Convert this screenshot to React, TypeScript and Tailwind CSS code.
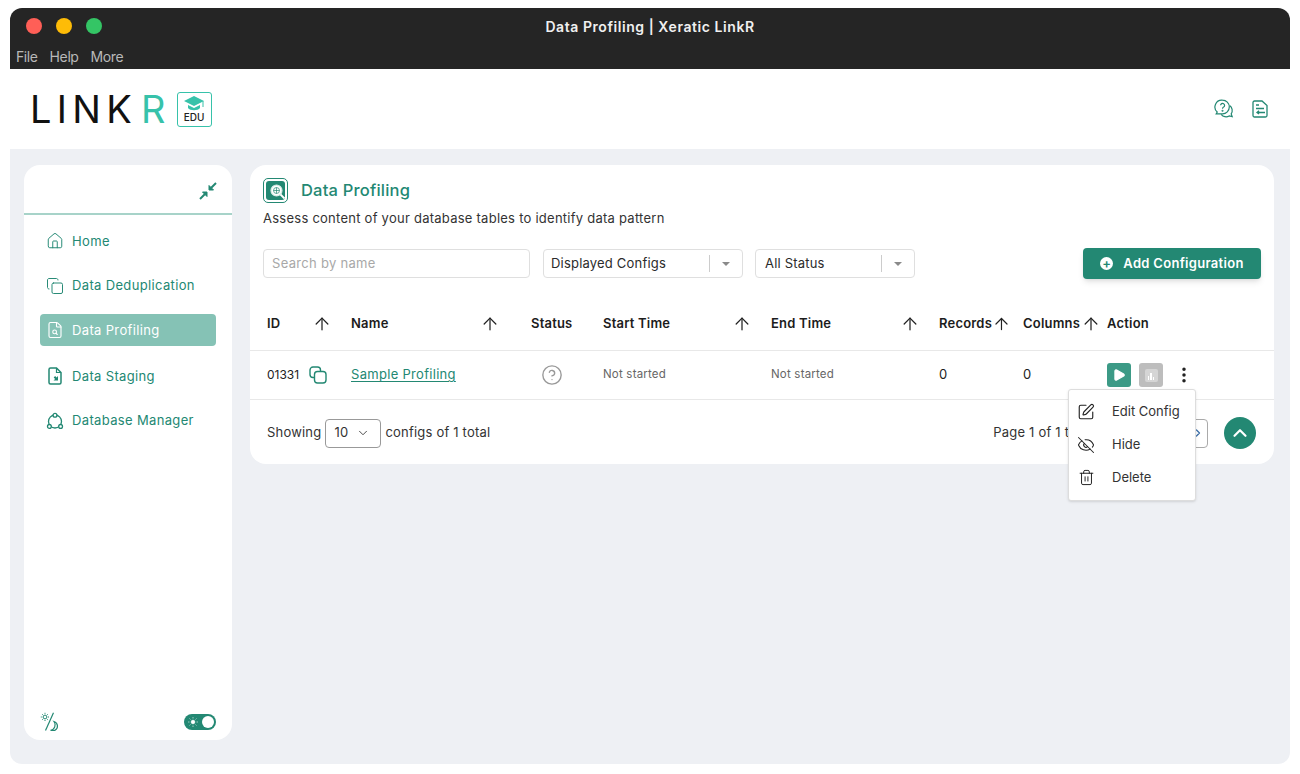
import React from 'react';
import {
  House,
  Copy,
  SquarePen,
  EyeOff,
  Trash2,
  Play,
  EllipsisVertical,
  ChevronUp,
  ChevronDown,
  ChevronRight,
  ArrowUp,
  CircleHelp,
  FileSearch,
} from 'lucide-react';

const teal = 'text-[#238873]';

function CollapseIcon() {
  return (
    <svg width="18" height="18" viewBox="0 0 18 18" fill="currentColor" stroke="currentColor" strokeWidth="1">
      <path d="M10 8V3.500L14.500 8z" />
      <path d="M12 6l5-5" strokeWidth="2" />
      <path d="M8 10v4.500L3.500 10z" />
      <path d="M6 12l-5 5" strokeWidth="2" />
    </svg>
  );
}

function ManagerIcon() {
  return (
    <svg width="18" height="18" viewBox="0 0 18 18" fill="none" stroke="currentColor" strokeWidth="1.300">
      <circle cx="9" cy="9.500" r="6.500" />
      <circle cx="9" cy="3.200" r="1.900" fill="#ffffff" />
      <circle cx="3.400" cy="14.400" r="1.900" fill="#ffffff" />
      <circle cx="14.600" cy="14.400" r="1.900" fill="#ffffff" />
    </svg>
  );
}

function StagingIcon() {
  return (
    <svg width="18" height="18" viewBox="0 0 18 18" fill="none" stroke="currentColor" strokeWidth="1.500">
      <path d="M4.500 1h6L15 5.500V15.500a1.500 1.500 0 0 1-1.500 1.500h-9A1.500 1.500 0 0 1 3 15.500v-13A1.500 1.500 0 0 1 4.500 1z" />
      <path d="M10.500 1v4.500H15" strokeWidth="1.200" />
      <path d="M12 9v4.500H7.500l1.600-1.600-1.400-1.400 1.400-1.400 1.400 1.400z" fill="currentColor" stroke="none" />
    </svg>
  );
}

function ChatHelpIcon() {
  return (
    <svg width="20" height="20" viewBox="0 0 20 20" fill="none" stroke="currentColor" strokeWidth="1.200">
      <path d="M8.500 1.200a6.800 6.800 0 0 1 0 13.600H2.200l1-1.800A6.800 6.800 0 0 1 8.500 1.200z" />
      <path d="M15.600 6.600a6 6 0 0 1 1.600 8.300l1 2.800-3-.8a6 6 0 0 1-8-1.600" />
      <path d="M6.600 6.300a2 2 0 1 1 3 1.800c-.7.400-1.100.8-1.100 1.600" />
      <circle cx="8.500" cy="11.800" r=".4" />
    </svg>
  );
}

function FileNotesIcon() {
  return (
    <svg width="18" height="18" viewBox="0 0 18 18" fill="none" stroke="currentColor" strokeWidth="1.300">
      <path d="M3.500 1h7.500L16 5.500v10a1.500 1.500 0 0 1-1.500 1.500h-11A1.500 1.500 0 0 1 2 15.500v-13A1.500 1.500 0 0 1 3.500 1z" />
      <path d="M5 5h3M5 8.500h8M6 12.500h8M8 10.800l-2 1.700 2 1.500" />
    </svg>
  );
}

function DayNightIcon() {
  return (
    <svg width="20" height="20" viewBox="0 0 20 20" fill="none" stroke="currentColor" strokeWidth="1">
      <circle cx="5" cy="5" r="1.900" />
      <path d="M5 .8v1.200M5 8v1.200M.8 5H2M8 5h1.200M2 2l.9.900M7.100 7.100l.9.900M2 8l.9-.900M7.100 2.900L8 2" strokeDasharray="1 .6" />
      <path d="M13.500.8L5.500 18.500" strokeWidth="1.200" />
      <path d="M14 9.500a4.800 4.800 0 0 1 1 8.800h-4.500a5.500 5.500 0 0 0 3.500-8.800z" strokeWidth="1.200" />
    </svg>
  );
}

function DuplicateIcon() {
  return (
    <svg width="18" height="18" viewBox="0 0 18 18" fill="none" stroke="currentColor" strokeWidth="1.400">
      <path d="M5.500 11.500H4A3 3 0 0 1 1 8.500V4a3 3 0 0 1 3-3h4.500a3 3 0 0 1 3 3v1.500" />
      <rect x="5.500" y="5.500" width="11.500" height="11.500" rx="3" />
    </svg>
  );
}

function ProfilingBadge() {
  return (
    <div className="flex h-[25px] w-[25px] items-center justify-center rounded-[5px] border border-[#238873] p-[2px]">
      <div className="relative h-full w-full rounded-[3px] bg-[#238873]">
        <svg className="absolute left-[3px] top-[2px]" width="17" height="17" viewBox="0 0 17 17" fill="none">
          <circle cx="7.500" cy="7.500" r="5.500" fill="#ffffff" stroke="#d8ece7" strokeWidth="1.200" />
          <circle cx="7.500" cy="7.500" r="3" stroke="#238873" strokeWidth=".7" />
          <path d="M4.500 7.500h6M7.500 4.500v6" stroke="#238873" strokeWidth=".7" />
          <path d="M11.500 11.500l4 4" stroke="#ffffff" strokeWidth="1.800" />
        </svg>
      </div>
    </div>
  );
}

function NavItem({ icon, label, active }: { icon: React.ReactNode; label: string; active?: boolean }) {
  return (
    <div
      className={`flex h-8 items-center gap-[7px] rounded-[4px] pl-[5px] text-[13px] tracking-[0.35px] ${
        active ? 'mb-[1.500px] bg-[#85c2b5] text-[#ffffff]' : teal
      }`}
    >
      <span className="flex w-[20px] justify-center">{icon}</span>
      <span className="pt-[1px]">{label}</span>
    </div>
  );
}

function HeaderCell({ label, sort, pad }: { label: string; sort?: boolean; pad?: string }) {
  return (
    <div className={`flex items-center justify-between text-[13px] font-semibold tracking-[0.2px] text-[#1c1c1c] ${pad ?? ''}`}>
      <span>{label}</span>
      {sort && <ArrowUp size={20} strokeWidth={1.500} className="text-[#222222]" />}
    </div>
  );
}

function SelectBox({ label, width, pad }: { label: string; width: string; pad: string }) {
  return (
    <div className={`flex h-[29px] items-center rounded-[4px] border border-[#dfdfdf] text-[13px] tracking-[0.2px] text-[#2b2b2b] ${width} ${pad}`}>
      <span className="flex-1">{label}</span>
      <span className="h-[17px] w-px bg-[#cccccc]" />
      <span className="flex w-[32px] justify-center">
        <span className="h-0 w-0 border-x-[4px] border-t-[4px] border-x-transparent border-t-[#8a8a8a]" />
      </span>
    </div>
  );
}

function MenuRow({ icon, label }: { icon: React.ReactNode; label: string }) {
  return (
    <div className="flex h-[33px] items-center gap-[17px] pl-[8px] text-[13px] text-[#333333]">
      <span className="flex w-[18px] justify-center text-[#222222]">{icon}</span>
      <span>{label}</span>
    </div>
  );
}

export default function App() {
  return (
    <div className="flex h-[774px] w-[1300px] flex-col overflow-hidden bg-white px-[10px] pb-[10px] pt-[8px] font-['Inter','Noto_Sans',sans-serif]">
      {/* title bar */}
      <div className="h-[61px] shrink-0 rounded-t-[12px] bg-[#252525]">
        <div className="relative flex h-[36px] items-center justify-center">
          <div className="absolute left-[16px] top-[10px] flex gap-[14px]">
            <span className="h-4 w-4 rounded-full bg-[#ff5f57]" />
            <span className="h-4 w-4 rounded-full bg-[#febc07]" />
            <span className="h-4 w-4 rounded-full bg-[#34c565]" />
          </div>
          <span className="text-[14px] font-semibold tracking-[0.56px] text-[#f0f0f0]">Data Profiling | Xeratic LinkR</span>
        </div>
        <div className="flex gap-[12px] pl-[6px] pt-[4px] text-[14px] leading-[17px] tracking-[-0.4px] text-[#b9b9b9]">
          <span>File</span>
          <span>Help</span>
          <span>More</span>
        </div>
      </div>

      {/* logo bar */}
      <div className="flex h-[80px] shrink-0 items-center justify-between bg-white pl-[20px] pr-[21px]">
        <div className="flex items-center">
          <span className="text-[38px] font-normal leading-none tracking-[5.300px] text-[#111111]">LINK</span>
          <span className="ml-[4px] text-[38px] font-normal leading-none text-[#37c2aa]">R</span>
          <div className="ml-[11px] flex h-[35px] w-[35px] flex-col items-center rounded-[3px] border-[1.500px] border-[#37c2aa] pt-[2px]">
            <svg width="22" height="17" viewBox="0 0 22 17">
              <path d="M11 1L21 6l-10 5L1 6z" fill="#37c2aa" />
              <path d="M5 10v3c2 3 10 3 12 0v-3l-6 3z" fill="#37c2aa" />
              <path d="M20 6v6" stroke="#37c2aa" strokeWidth="1" />
            </svg>
            <span className="text-[10px] font-medium leading-[11px] text-[#222222]">EDU</span>
          </div>
        </div>
        <div className={`flex items-center gap-[17px] ${teal}`}>
          <ChatHelpIcon />
          <FileNotesIcon />
        </div>
      </div>

      {/* content */}
      <div className="flex min-h-0 flex-1 items-start gap-[18px] rounded-b-[12px] bg-[#eef0f4] px-[14px] pb-[24px] pt-[16px]">
        {/* sidebar */}
        <aside className="flex h-full w-[208px] shrink-0 flex-col rounded-[16px] bg-white">
          <div className={`flex h-[50px] shrink-0 items-center justify-end border-b-2 border-[#a7d3c9] pr-[15px] pt-[3px] ${teal}`}>
            <CollapseIcon />
          </div>
          <nav className="flex flex-1 flex-col gap-[12.500px] px-[16px] pt-[10px]">
            <NavItem icon={<House size={18} strokeWidth={1.300} />} label="Home" />
            <NavItem icon={<Copy size={18} strokeWidth={1.300} />} label="Data Deduplication" />
            <NavItem active icon={<FileSearch size={18} strokeWidth={1.500} />} label="Data Profiling" />
            <NavItem icon={<StagingIcon />} label="Data Staging" />
            <NavItem icon={<ManagerIcon />} label="Database Manager" />
          </nav>
          <div className={`flex items-center justify-between pb-[8px] pl-[16px] pr-[16px] ${teal}`}>
            <DayNightIcon />
            <div className="flex h-4 w-8 items-center justify-between rounded-full bg-[#238873] pl-[4px] pr-[2px]">
              <svg width="10" height="10" viewBox="0 0 10 10" stroke="#ffffff" strokeWidth=".8">
                <circle cx="5" cy="5" r="1.800" fill="#ffffff" />
                <path d="M5 0v1.500M5 8.500V10M0 5h1.500M8.500 5H10M1.500 1.500l1 1M7.500 7.500l1 1M1.500 8.500l1-1M7.500 2.500l1-1" opacity=".7" />
              </svg>
              <span className="h-3 w-3 rounded-full bg-white" />
            </div>
          </div>
        </aside>

        {/* main card */}
        <main className="relative h-[299px] w-[1024px] shrink-0 rounded-[16px] bg-white">
          <div className="px-[13px] pt-[13px]">
            <div className="flex items-center gap-[13px]">
              <ProfilingBadge />
              <h1 className={`text-[16.500px] font-medium tracking-[0.2px] ${teal}`}>Data Profiling</h1>
            </div>
            <p className="mt-[6px] text-[13px] leading-[18px] tracking-[0.25px] text-[#333333]">
              Assess content of your database tables to identify data pattern
            </p>
            <div className="mt-[21px] flex items-center">
              <div className="flex h-[29px] w-[267px] items-center rounded-[4px] border border-[#dfdfdf] pl-[8px] text-[13px] tracking-[0.3px] text-[#a8a8a8]">
                Search by name
              </div>
              <div className="ml-[13px]">
                <SelectBox label="Displayed Configs" width="w-[200px]" pad="pl-[7px]" />
              </div>
              <div className="ml-[12px]">
                <SelectBox label="All Status" width="w-[160px]" pad="pl-[9px]" />
              </div>
              <button className="ml-auto flex h-[31px] w-[178px] items-center justify-center gap-[10px] rounded-[4px] bg-[#238873] text-[13px] font-semibold tracking-[0.3px] text-white shadow-md">
                <span className="flex h-[13px] w-[13px] items-center justify-center rounded-full bg-white text-[13px] leading-none text-[#238873]">+</span>
                Add Configuration
              </button>
            </div>
          </div>

          {/* table header */}
          <div className="mt-[22px] grid h-[50px] grid-cols-[84px_180px_72px_168px_168px_84px_84px_1fr] items-center border-b border-[#e8e8e8] pb-[4px] pl-[17px]">
            <HeaderCell label="ID" sort pad="pr-[19px]" />
            <HeaderCell label="Name" sort pad="pr-[31px]" />
            <HeaderCell label="Status" />
            <HeaderCell label="Start Time" sort pad="pr-[19px]" />
            <HeaderCell label="End Time" sort pad="pr-[19px]" />
            <HeaderCell label="Records" sort pad="pr-[12px]" />
            <HeaderCell label="Columns" sort pad="pr-[6px]" />
            <HeaderCell label="Action" />
          </div>

          {/* table row */}
          <div className="grid h-[49px] grid-cols-[84px_180px_72px_168px_168px_84px_84px_1fr] items-center border-b border-[#e8e8e8] pl-[17px] text-[13px] text-[#222222]">
            <div className="flex items-center gap-[10px]">
              <span className="text-[12px]">01331</span>
              <span className={teal}><DuplicateIcon /></span>
            </div>
            <span className={`text-[13px] tracking-[0.3px] underline underline-offset-2 ${teal}`}>Sample Profiling</span>
            <div className="pl-[10px]">
              <CircleHelp size={22} strokeWidth={1.500} className="text-[#999999]" />
            </div>
            <span className="text-[11.500px] tracking-[0.2px] text-[#666666]">Not started</span>
            <span className="text-[11.500px] tracking-[0.2px] text-[#666666]">Not started</span>
            <span>0</span>
            <span>0</span>
            <div className="flex items-center gap-[8px]">
              <span className="flex h-6 w-6 items-center justify-center rounded-[3px] bg-[#3c9a86]">
                <Play size={14} fill="#ffffff" className="text-white" />
              </span>
              <span className="flex h-6 w-6 items-center justify-center rounded-[3px] bg-[#bdbdbd]">
                <span className="flex h-[13px] w-[13px] items-end justify-center gap-[1px] rounded-[2px] bg-[#d5d5d5] pb-[2px]">
                  <span className="h-[4px] w-[1.500px] bg-white" />
                  <span className="h-[7px] w-[1.500px] bg-white" />
                  <span className="h-[3px] w-[1.500px] bg-white" />
                </span>
              </span>
              <EllipsisVertical size={20} strokeWidth={2.200} className="ml-[3px] text-[#222222]" />
            </div>
          </div>

          {/* footer */}
          <div className="flex h-[64px] items-center pl-[17px] pr-[18px] pt-[2px] text-[13px] tracking-[0.2px] text-[#333333]">
            <span>Showing</span>
            <div className="ml-[4px] flex h-[29px] w-[56px] items-center justify-between rounded-[4px] border border-[#999999] pl-[8px] pr-[10px]">
              <span>10</span>
              <ChevronDown size={14} strokeWidth={1.500} />
            </div>
            <span className="ml-[4px]">configs of 1 total</span>
            <span className="ml-auto">Page 1 of 1 to</span>
            <div className="ml-[99px] flex h-[29px] w-[32px] items-center justify-end rounded-[4px] border border-[#aaaaaa] pr-[3px]">
              <ChevronRight size={12} strokeWidth={2.500} className="text-[#3c6ea8]" />
            </div>
            <span className="ml-[16px] flex h-8 w-8 items-center justify-center rounded-full bg-[#238873]">
              <ChevronUp size={22} strokeWidth={2.400} className="text-white" />
            </span>
          </div>

          {/* action menu */}
          <div className="absolute left-[818px] top-[224px] w-[128px] rounded-[3px] border border-[#dddddd] bg-white pb-[6px] pt-[5px] shadow-sm">
            <MenuRow icon={<SquarePen size={18} strokeWidth={1.500} />} label="Edit Config" />
            <MenuRow icon={<EyeOff size={18} strokeWidth={1.400} />} label="Hide" />
            <MenuRow icon={<Trash2 size={17} strokeWidth={1.400} />} label="Delete" />
          </div>
        </main>
      </div>
    </div>
  );
}
